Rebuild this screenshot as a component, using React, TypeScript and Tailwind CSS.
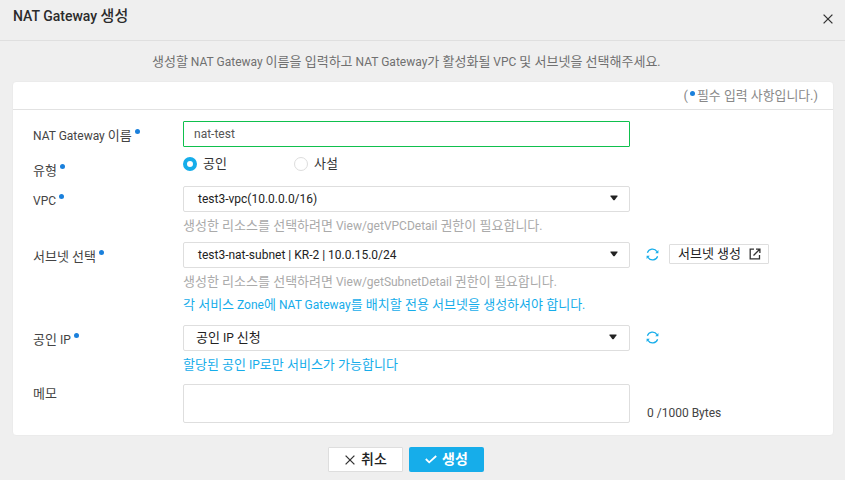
import type { ReactNode } from 'react';

const Dot = ({ className = '' }: { className?: string }) => (
  <i className={`block size-[5px] shrink-0 rounded-full bg-[#1a80dc] ${className}`} />
);

// Sets Hangul runs one step larger than the Latin text around them.
const T = ({ children }: { children: string }) => (
  <>
    {children.split(/([가-힣]+(?: +[가-힣]+)*)/).map((part, i) =>
      i % 2 ? <span key={i} className="text-[13px] leading-none">{part}</span> : part
    )}
  </>
);

function Row({ label, labelClass, rowClass, required = true, children }: {
  label: string; labelClass: string; rowClass: string; required?: boolean; children: ReactNode;
}) {
  return (
    <div className={`flex items-start pl-5 ${rowClass}`}>
      <div className={`flex w-[150px] shrink-0 items-start text-[#444] ${labelClass}`}>
        <span><T>{label}</T></span>
        {required && <Dot className="mt-[3px] ml-[3px]" />}
      </div>
      {children}
    </div>
  );
}

const Caret = () => (
  <svg className="-mt-[2px]" width="8" height="6" viewBox="0 0 8 6" fill="#222"><path d="M0.9 0.5h6.2q.9 0 .4.8L4.8 4.9q-.8.9-1.6 0L.5 1.3Q0 .5.9.5z" /></svg>
);

const Select = ({ children, className }: { children: string; className: string }) => (
  <div className={`flex h-[26px] w-[447px] items-center justify-between rounded-[2px] border border-[#dedede] bg-white text-[#222] ${className}`}>
    <span><T>{children}</T></span>
    <Caret />
  </div>
);

const Refresh = () => (
  <svg className="ml-4 mt-[6px] shrink-0" width="13" height="13" viewBox="0 0 13 13" fill="none" stroke="#16adea" strokeWidth="1.2">
    <path d="M1.4 4.8A5.3 5.3 0 0 1 11 3.6M11.6 8.2A5.3 5.3 0 0 1 2 9.4" />
    <path d="M12.4 2v3.2H9.2zM.6 11V7.8H3.8z" fill="#16adea" stroke="none" />
  </svg>
);

const Cross = () => (
  <svg width="10" height="10" viewBox="0 0 10 10" fill="none" stroke="#333" strokeWidth="1.3">
    <path d="M.6.6l8.8 8.8M9.4.6L.6 9.4" />
  </svg>
);

export default function App() {
  return (
    <div className="flex h-[480px] w-[845px] flex-col bg-[#efefef] font-[Roboto,'Noto_Sans_CJK_KR',sans-serif] text-[12px] leading-5 whitespace-nowrap">
      <header className="flex h-[41px] items-start justify-between border-b border-[#dfdfdf] pl-[13px] pr-3 text-[#2b2b2b]">
        <h1 className="pt-[6px] text-[14px] font-medium">NAT Gateway <span className="text-[15px] leading-none">생성</span></h1>
        <span className="pt-[14px]"><Cross /></span>
      </header>
      <p className="h-10 pl-[152px] pt-[11px] text-[#707070]">
        <T>생성할 NAT Gateway 이름을 입력하고 NAT Gateway가 활성화될 VPC 및 서브넷을 선택해주세요.</T>
      </p>
      <main className="ml-3 h-[355px] w-[822px] rounded-[4px] border border-[#ebebeb] bg-white">
        <div className="flex h-[28px] items-start justify-end border-b border-[#e2e2e2] pr-[15px] pt-[4px] text-[12.9px] text-[#888]">
          <span>(</span><Dot className="mx-[2px] mt-[5px]" /><span>필수 입력 사항입니다.)</span>
        </div>
        <div className="pt-[11px]">
          <Row label="NAT Gateway 이름" rowClass="h-[35px]" labelClass="pt-[5px]">
            <div className="flex h-[26px] w-[447px] items-center rounded-[1px] border border-[#0fc04d] pl-[10px] text-[#555]">nat-test</div>
          </Row>
          <Row label="유형" rowClass="h-[30px]" labelClass="pt-[5px]">
            <div className="flex h-[16px] items-center text-[13px] text-[#333]">
              <i className="block size-[14px] rounded-full border-4 border-[#16adea] bg-white" />
              <span className="w-[97px] pl-[6px] leading-[14px]">공인</span>
              <i className="block size-[14px] rounded-full border border-[#ddd] bg-white" />
              <span className="pl-[6px] leading-[14px]">사설</span>
            </div>
          </Row>
          <Row label="VPC" rowClass="h-[56px]" labelClass="pt-[5px]">
            <div>
              <Select className="pl-[14px] pr-[11px]">test3-vpc(10.0.0.0/16)</Select>
              <p className="pt-[4px] text-[#aaa]"><T>생성한 리소스를 선택하려면 View/getVPCDetail 권한이 필요합니다.</T></p>
            </div>
          </Row>
          <Row label="서브넷 선택" rowClass="h-[83px]" labelClass="pt-[5px]">
            <div>
              <Select className="pl-[14px] pr-[11px]">test3-nat-subnet | KR-2 | 10.0.15.0/24</Select>
              <p className="pt-[4px] text-[#aaa]"><T>생성한 리소스를 선택하려면 View/getSubnetDetail 권한이 필요합니다.</T></p>
              <p className="pt-[3px] text-[#16adea]"><T>각 서비스 Zone에 NAT Gateway를 배치할 전용 서브넷을 생성하셔야 합니다.</T></p>
            </div>
            <Refresh />
            <button className="ml-[10px] mt-[2px] flex h-5 w-[100px] items-center rounded-[1px] border border-[#dedede] bg-white pl-2 text-[13px] text-[#222]">
              <span className="w-[71px] text-left leading-[18px]">서브넷 생성</span>
              <svg width="12" height="12" viewBox="0 0 12 12" fill="none" stroke="#333" strokeWidth="1.3">
                <path d="M5 1.2H1.2v9.6h9.3V7M7 1.2h3.9V5M10.7 1.3L4.5 7.5" />
              </svg>
            </button>
          </Row>
          <Row label="공인 IP" rowClass="h-[59px]" labelClass="pt-[5px]">
            <div>
              <Select className="pl-[12px] pr-[12px]">공인 IP 신청</Select>
              <p className="pt-[4px] text-[#16adea]"><T>할당된 공인 IP로만 서비스가 가능합니다</T></p>
            </div>
            <Refresh />
          </Row>
          <Row label="메모" rowClass="h-[39px]" labelClass="" required={false}>
            <div className="h-[39px] w-[447px] rounded-[2px] border border-[#dedede]" />
            <span className="pl-[17px] pt-[19px] text-[#444]">0 /1000 Bytes</span>
          </Row>
        </div>
      </main>
      <footer className="flex gap-[6px] pl-[328px] pt-[11px] text-[14px]">
        <button className="flex h-[25px] w-[75px] items-center rounded-[1px] border border-[#dedede] bg-white pl-4 text-[#222]">
          <Cross /><span className="pb-[2px] pl-[6px] font-medium">취소</span>
        </button>
        <button className="flex h-[25px] w-[75px] items-center rounded-[2px] bg-[#16adea] pl-4 font-bold text-white">
          <svg width="12" height="9" viewBox="0 0 12 9" fill="none" stroke="white" strokeWidth="1.8"><path d="M.8 4l3.4 3.3L11.2 1" /></svg>
          <span className="pb-[2px] pl-[5px]">생성</span>
        </button>
      </footer>
    </div>
  );
}
